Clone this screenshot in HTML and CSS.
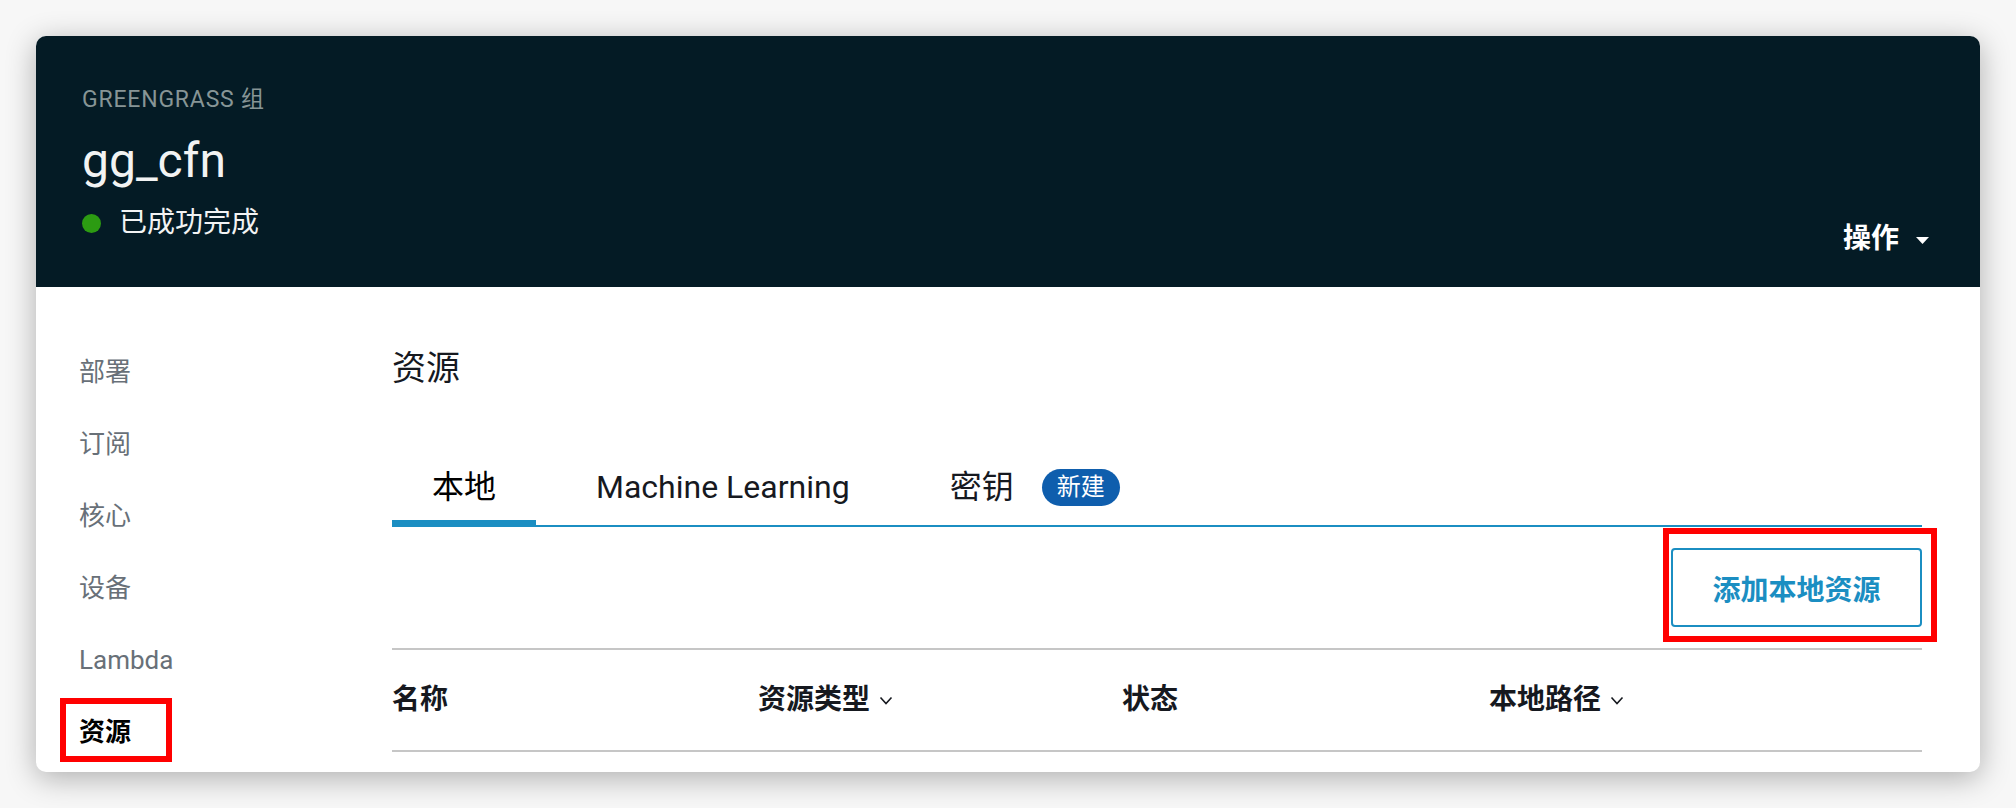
FILE: index.html
```html
<!DOCTYPE html>
<html lang="zh-CN">
<head>
<meta charset="utf-8">
<title>gg_cfn</title>
<link rel="stylesheet" href="styles.css">
</head>
<body>
<div class="card">
  <header class="hero">
    <div class="hero-info">
      <div class="eyebrow">GREENGRASS 组</div>
      <h1 class="title">gg_cfn</h1>
      <div class="status"><span class="dot"></span><span>已成功完成</span></div>
    </div>
    <button class="actions" type="button">操作<svg class="caret" width="13" height="7" viewBox="0 0 13 7"><path d="M0 0 L13 0 L6.5 7 Z" fill="#ffffff"/></svg></button>
  </header>
  <div class="body">
    <nav class="side">
      <a class="side-item">部署</a>
      <a class="side-item">订阅</a>
      <a class="side-item">核心</a>
      <a class="side-item">设备</a>
      <a class="side-item">Lambda</a>
      <a class="side-item is-active">资源</a>
    </nav>
    <main class="main">
      <h2 class="heading">资源</h2>
      <div class="tabs">
        <div class="tab is-active">本地</div>
        <div class="tab">Machine Learning</div>
        <div class="tab">密钥<span class="badge">新建</span></div>
      </div>
      <div class="toolbar">
        <button class="btn" type="button">添加本地资源</button>
      </div>
      <div class="thead">
        <div class="th">名称</div>
        <div class="th">资源类型<svg class="chev" width="14" height="9" viewBox="0 0 14 9"><polyline points="1.5,1.5 7,7.5 12.5,1.5" fill="none" stroke="#16191f" stroke-width="1.6"/></svg></div>
        <div class="th">状态</div>
        <div class="th">本地路径<svg class="chev" width="14" height="9" viewBox="0 0 14 9"><polyline points="1.5,1.5 7,7.5 12.5,1.5" fill="none" stroke="#16191f" stroke-width="1.6"/></svg></div>
      </div>
    </main>
  </div>
</div>
</body>
</html>
```

FILE: styles.css
```css
*, *::before, *::after { box-sizing: border-box; }

html, body {
  margin: 0;
  padding: 0;
}

body {
  background: #f7f7f7;
  padding: 36px;
  font-family: Roboto, "Noto Sans CJK SC", sans-serif;
  color: #16191f;
}

.card {
  width: 1944px;
  background: #ffffff;
  border-radius: 10px;
  box-shadow: 0 6px 30px rgba(0, 0, 0, 0.3);
}

/* Hero header */
.hero {
  display: flex;
  justify-content: space-between;
  align-items: flex-end;
  background: #041b25;
  border-radius: 10px 10px 0 0;
  padding: 49px 51px 30px 46px;
  height: 251px;
}

.hero-info {
  display: flex;
  flex-direction: column;
}

.eyebrow {
  font-size: 23px;
  line-height: 30px;
  letter-spacing: 0.8px;
  color: #879596;
}

.title {
  margin: 20px 0 0;
  font-size: 48px;
  line-height: 52px;
  font-weight: 400;
  color: #f2f3f3;
}

.status {
  display: flex;
  align-items: center;
  margin-top: 18px;
  margin-bottom: 16px;
  font-size: 28px;
  line-height: 36px;
  color: #f2f3f3;
}

.dot {
  width: 19px;
  height: 19px;
  border-radius: 50%;
  background: #2c9b12;
  margin-right: 18px;
}

.actions {
  display: flex;
  align-items: center;
  background: none;
  border: 0;
  padding: 0;
  font-family: inherit;
  font-size: 28px;
  line-height: 36px;
  font-weight: 700;
  color: #ffffff;
}

.caret {
  margin-left: 17px;
  margin-top: 3px;
}

/* Body */
.body {
  display: flex;
}

.side {
  width: 356px;
  flex: none;
  display: flex;
  flex-direction: column;
  padding: 49px 0 0 43px;
}

.side-item {
  position: relative;
  display: block;
  font-size: 26px;
  line-height: 36px;
  padding: 18px 0;
  color: #687078;
}

.side-item.is-active {
  color: #000000;
  font-weight: 700;
}

.side-item.is-active::after {
  content: "";
  position: absolute;
  left: -19px;
  top: 2px;
  width: 112px;
  height: 64px;
  border: 6px solid #ff0000;
}

.main {
  flex: 1;
  padding: 61px 58px 20px 0;
}

.heading {
  margin: 0;
  font-size: 34px;
  line-height: 40px;
  font-weight: 400;
  color: #16191f;
}

.tabs {
  display: flex;
  gap: 20px;
  margin-top: 79px;
  border-bottom: 2px solid #1b8ec2;
}

.tab {
  display: flex;
  align-items: center;
  padding: 0 40px 13px;
  font-size: 32px;
  line-height: 40px;
  color: #16191f;
  border-bottom: 5px solid transparent;
}

.tab.is-active {
  color: #000000;
  border-bottom-color: #1b8ec2;
}

.badge {
  display: inline-flex;
  align-items: center;
  height: 37px;
  margin-left: 28px;
  padding: 0 15px;
  border-radius: 19px;
  background: #0f5ead;
  color: #ffffff;
  font-size: 24px;
  line-height: 37px;
}

.toolbar {
  display: flex;
  justify-content: flex-end;
  padding: 21px 0;
  border-bottom: 2px solid #c6c6c6;
}

.btn {
  position: relative;
  width: 251px;
  height: 79px;
  border: 2px solid #1b8ec2;
  border-radius: 4px;
  background: #ffffff;
  font-family: inherit;
  font-size: 28px;
  font-weight: 700;
  color: #1b8ec2;
}

.btn::after {
  content: "";
  position: absolute;
  left: -10px;
  top: -22px;
  right: -17px;
  bottom: -17px;
  border: 6px solid #ff0000;
}

.thead {
  display: grid;
  grid-template-columns: 366px 364px 367px 1fr;
  align-items: center;
  height: 102px;
  border-bottom: 2px solid #c6c6c6;
}

.th {
  display: flex;
  align-items: center;
  font-size: 28px;
  line-height: 36px;
  font-weight: 700;
  color: #16191f;
}

.chev {
  margin-left: 9px;
  margin-top: 1px;
}
```
